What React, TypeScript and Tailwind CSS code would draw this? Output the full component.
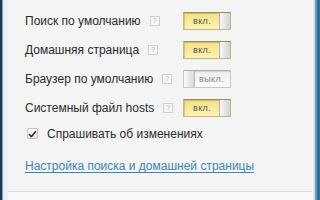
import React from "react";

function Help() {
  return (
    <span className="ml-[9px] flex h-[10px] w-[10px] shrink-0 items-center justify-center border border-[#cfcfcf] bg-[#f7f7f7] text-[7px] leading-none text-[#b0b0b0]">
      ?
    </span>
  );
}

function Toggle({ on }: { on: boolean }) {
  if (on) {
    return (
      <div className="relative h-[18px] w-[48px] shrink-0 border border-[#c2b87c] border-t-[#9a8f5a] bg-gradient-to-b from-[#f2e184] to-[#fdf3b2] shadow-[inset_1px_1px_1px_rgba(120,100,30,0.3)]">
        <span className="absolute left-[9px] top-[3px] text-[9px] leading-[10px] tracking-[0.4px] text-[#555]">
          вкл.
        </span>
        <div className="absolute right-0 top-0 h-[16px] w-[11px] border-l border-[#b0b0b0] bg-gradient-to-r from-[#f8f8f8] to-[#d2d2d2]" />
      </div>
    );
  }
  return (
    <div className="relative h-[18px] w-[48px] shrink-0 border border-[#c9c9c9] border-t-[#adadad] bg-gradient-to-b from-[#ededed] to-[#fbfbfb] shadow-[inset_1px_1px_1px_rgba(0,0,0,0.12)]">
      <div className="absolute left-0 top-0 h-[16px] w-[11px] border-r border-[#b8b8b8] bg-gradient-to-r from-[#fafafa] to-[#d8d8d8]" />
      <span className="absolute left-[15px] top-[3px] text-[9px] leading-[10px] tracking-[0.4px] text-[#8a8a8a]">
        выкл.
      </span>
    </div>
  );
}

function Row({ label, on }: { label: string; on: boolean }) {
  return (
    <div className="flex h-[29px] items-center">
      <div className="flex w-[158px] items-center whitespace-nowrap">
        <span>{label}</span>
        <Help />
      </div>
      <Toggle on={on} />
    </div>
  );
}

export default function App() {
  return (
    <div
      className="flex h-[200px] w-[320px] overflow-hidden bg-[#f4f4f4] text-[12px] text-[#2a2a2a]"
      style={{ fontFamily: '"Liberation Sans", Arial, sans-serif' }}
    >
      <div className="flex h-full">
        <div className="w-[2px] bg-[#1f3658]" />
        <div className="w-[1px] bg-[#7e9bb9]" />
        <div className="w-[5px] bg-gradient-to-r from-[#e3eaf1] to-[#f2f3f5]" />
      </div>
      <div className="flex flex-1 flex-col">
        <div className="flex h-[191px] flex-col pl-[17px] pt-[6px]">
          <Row label="Поиск по умолчанию" on={true} />
          <Row label="Домашняя страница" on={true} />
          <Row label="Браузер по умолчанию" on={false} />
          <Row label="Системный файл hosts" on={true} />
          <div className="flex h-[23px] items-center">
            <div className="ml-[2px] flex h-[11px] w-[11px] items-center justify-center rounded-[1px] border border-[#c4c4c4] bg-gradient-to-b from-[#fdfdfd] to-[#e6e6e6]">
              <svg width="9" height="8" viewBox="0 0 9 8">
                <path d="M1 4.2 L3.4 6.6 L8 1.2" fill="none" stroke="#2e2e2e" strokeWidth="1.6" />
              </svg>
            </div>
            <span className="ml-[9px]">Спрашивать об изменениях</span>
          </div>
          <div className="mt-[11px] flex h-[20px] items-center">
            <span className="text-[#3a87b3] underline decoration-[#3a87b3] underline-offset-[2px]">
              Настройка поиска и домашней страницы
            </span>
          </div>
        </div>
        <div className="h-[1px] bg-[#d9d9d9]" />
        <div className="flex-1 bg-[#fafafa]" />
      </div>
      <div className="flex h-full">
        <div className="w-[1px] bg-[#fdfdfd]" />
        <div className="w-[2px] bg-[#cde2ef]" />
        <div className="w-[2px] bg-[#5d9cc4]" />
        <div className="w-[3px] bg-[#3a6b95]" />
      </div>
    </div>
  );
}
